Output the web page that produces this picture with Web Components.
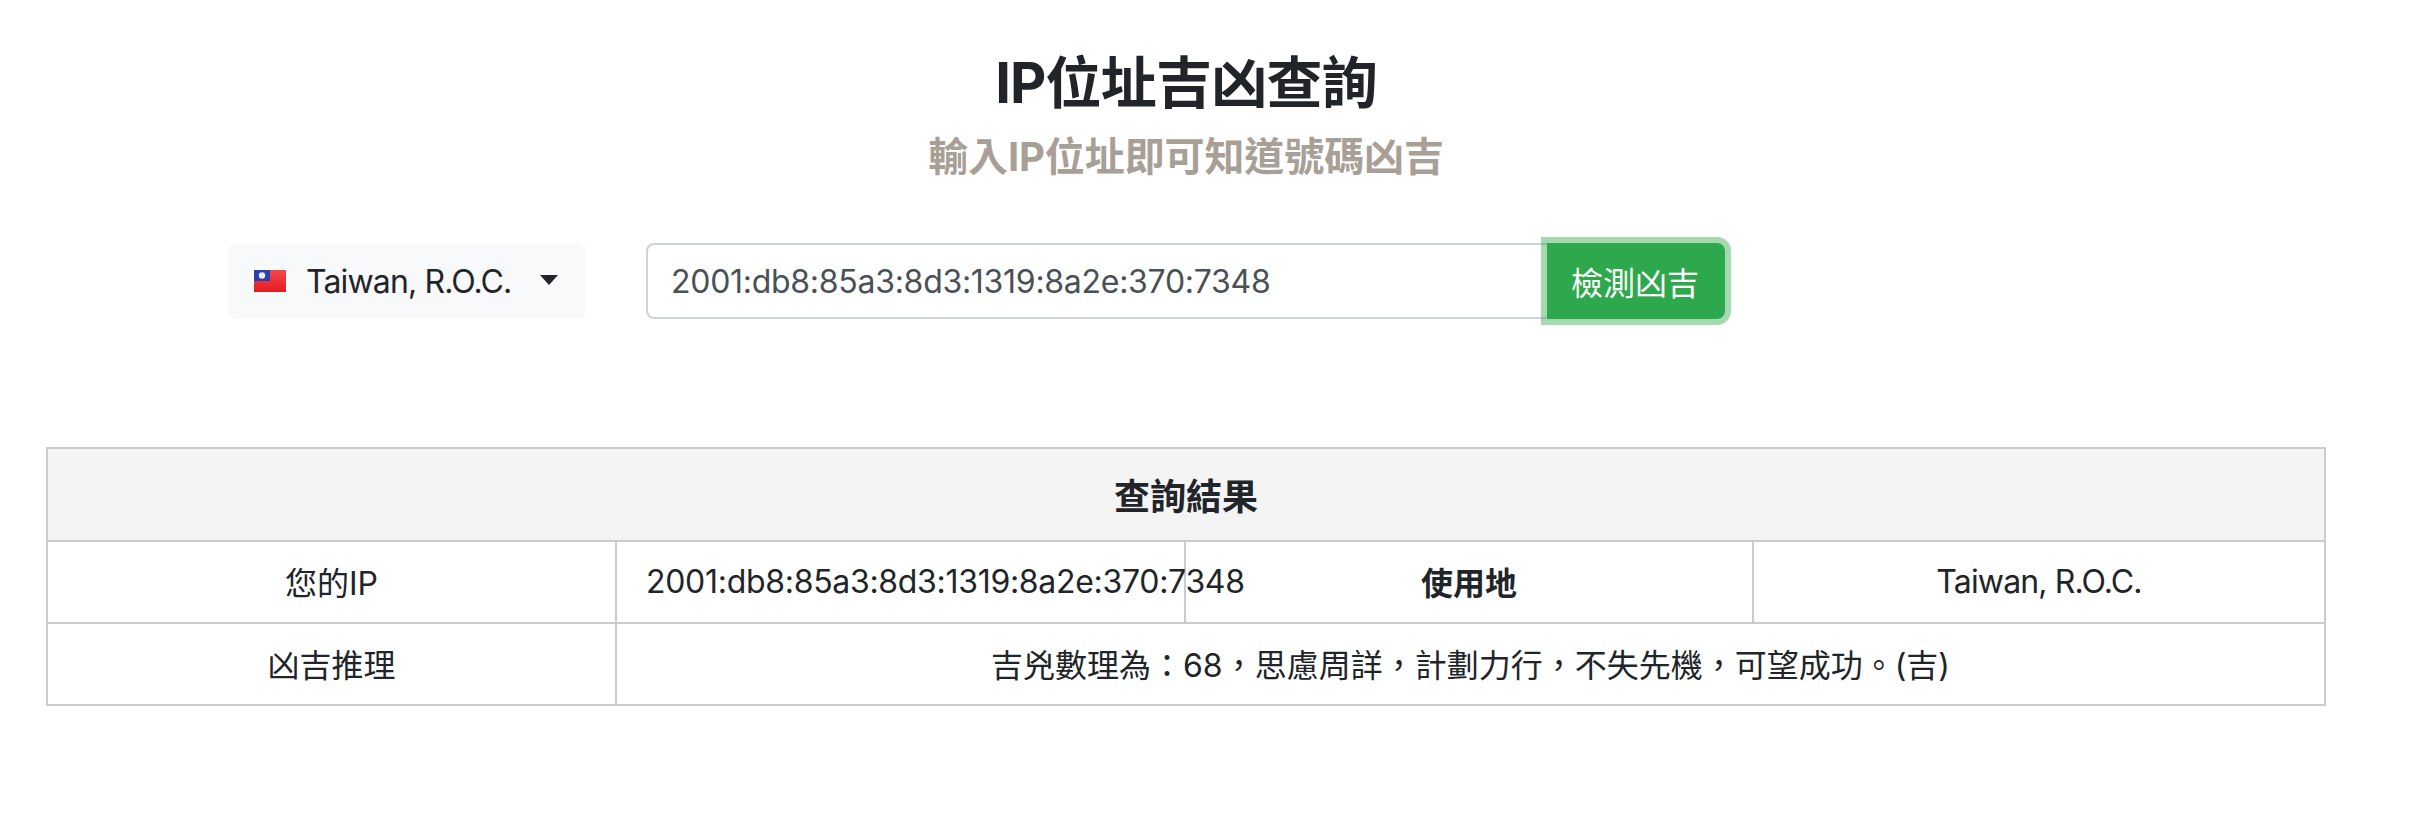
<!DOCTYPE html>
<html lang="zh-Hant">
<head>
<meta charset="utf-8">
<title>IP位址吉凶查詢</title>
<style>
  html, body { margin: 0; background: #fff; }
  body {
    font-family: Inter, "Noto Sans CJK TC", sans-serif;
    color: #212529;
  }
</style>
</head>
<body>
<ip-page>
  <page-heading>
    <span slot="title">IP位址吉凶查詢</span>
    <span slot="sub">輸入IP位址即可知道號碼凶吉</span>
  </page-heading>
  <ip-search value="2001:db8:85a3:8d3:1319:8a2e:370:7348" label="檢測凶吉">
    <country-select>Taiwan, R.O.C.</country-select>
  </ip-search>
  <result-table></result-table>
</ip-page>

<script>
class IpPage extends HTMLElement {
  constructor() {
    super();
    this.attachShadow({ mode: 'open' });
    this.shadowRoot.innerHTML = `
      <style>
        :host {
          display: block;
          padding: 0 100px 0 46px;
          font-family: Inter, "Noto Sans CJK TC", sans-serif;
        }
      </style>
      <slot></slot>
    `;
  }
}
customElements.define('ip-page', IpPage);

class PageHeading extends HTMLElement {
  constructor() {
    super();
    this.attachShadow({ mode: 'open' });
    this.shadowRoot.innerHTML = `
      <style>
        :host {
          display: block;
          text-align: center;
          padding-top: 47px;
        }
        h1 {
          margin: 0;
          font-size: 56px;
          line-height: 72px;
          font-weight: 700;
          letter-spacing: -0.8px;
          color: #212529;
        }
        h2 {
          margin: 6px 0 0;
          font-size: 40px;
          line-height: 64px;
          font-weight: 700;
          letter-spacing: -0.1px;
          color: #a89f97;
        }
      </style>
      <h1><slot name="title"></slot></h1>
      <h2><slot name="sub"></slot></h2>
    `;
  }
}
customElements.define('page-heading', PageHeading);

class CountrySelect extends HTMLElement {
  constructor() {
    super();
    this.attachShadow({ mode: 'open' });
    this.shadowRoot.innerHTML = `
      <style>
        :host {
          display: flex;
          align-items: center;
          box-sizing: border-box;
          width: 358px;
          height: 76px;
          padding: 0 28px 0 26px;
          background: #f8f9fa;
          border-radius: 8px;
          font-size: 32px;
          color: #212529;
        }
        svg { width: 32px; height: 22px; flex: none; margin-right: 20px; }
        .name { flex: 1; white-space: nowrap; letter-spacing: -0.85px; }
        .caret {
          width: 0;
          height: 0;
          border-top: 10px solid #212529;
          border-left: 9px solid transparent;
          border-right: 9px solid transparent;
          margin-top: -3px;
        }
      </style>
      <svg viewBox="0 0 32 22">
        <defs>
          <linearGradient id="red" x1="0" y1="0" x2="0" y2="1">
            <stop offset="0" stop-color="#f4484c"/>
            <stop offset="1" stop-color="#e31b23"/>
          </linearGradient>
        </defs>
        <rect width="32" height="22" fill="url(#red)"/>
        <rect width="16" height="11" fill="#2f3fa8"/>
        <circle cx="8" cy="5.5" r="3.2" fill="#e8ecff"/>
      </svg>
      <span class="name"><slot></slot></span>
      <span class="caret"></span>
    `;
  }
}
customElements.define('country-select', CountrySelect);

class IpSearch extends HTMLElement {
  constructor() {
    super();
    this.attachShadow({ mode: 'open' });
    this.shadowRoot.innerHTML = `
      <style>
        :host {
          display: flex;
          align-items: center;
          padding: 0 0 0 182px;
          margin-top: 54px;
          font-size: 32px;
        }
        .group {
          display: flex;
          margin-left: 60px;
          height: 76px;
        }
        input {
          box-sizing: border-box;
          width: 901px;
          height: 76px;
          padding: 0 23px;
          border: 2px solid #ced4da;
          border-right: 0;
          border-radius: 8px 0 0 8px;
          background: #fff;
          color: #495057;
          font: inherit;
          letter-spacing: -0.28px;
          outline: none;
        }
        button {
          box-sizing: border-box;
          width: 178px;
          height: 76px;
          padding: 0 2px 0 0;
          border: 0;
          border-radius: 0 8px 8px 0;
          background: #2ea84c;
          color: #fff;
          font: inherit;
          box-shadow: 0 0 0 6px rgba(40, 167, 69, .42);
          position: relative;
        }
      </style>
      <slot></slot>
      <div class="group">
        <input type="text">
        <button type="button"></button>
      </div>
    `;
  }
  connectedCallback() {
    this.shadowRoot.querySelector('input').value = this.getAttribute('value');
    this.shadowRoot.querySelector('button').textContent = this.getAttribute('label');
  }
}
customElements.define('ip-search', IpSearch);

class ResultTable extends HTMLElement {
  constructor() {
    super();
    this.attachShadow({ mode: 'open' });
    this.shadowRoot.innerHTML = `
      <style>
        :host {
          display: block;
          margin-top: 128px;
          font-size: 32px;
          color: #212529;
        }
        table {
          width: 100%;
          table-layout: fixed;
          border-collapse: collapse;
        }
        th, td {
          box-sizing: border-box;
          border: 2px solid #ccc;
          padding: 0 30px 2px;
          text-align: center;
          height: 82px;
          white-space: nowrap;
        }
        thead th {
          height: 93px;
          background: #f4f4f4;
          font-size: 36px;
          font-weight: 700;
        }
        tbody th { font-weight: 700; }
        .ip { text-align: left; letter-spacing: -0.3px; padding-left: 29px; }
        .place { letter-spacing: -0.85px; }
      </style>
      <table>
        <colgroup>
          <col style="width:569px"><col style="width:569px"><col style="width:568px"><col>
        </colgroup>
        <thead>
          <tr><th colspan="4">查詢結果</th></tr>
        </thead>
        <tbody>
          <tr>
            <td>您的IP</td>
            <td class="ip">2001:db8:85a3:8d3:1319:8a2e:370:7348</td>
            <th>使用地</th>
            <td class="place">Taiwan, R.O.C.</td>
          </tr>
          <tr>
            <td>凶吉推理</td>
            <td colspan="3">吉兇數理為：68，思慮周詳，計劃力行，不失先機，可望成功。(吉)</td>
          </tr>
        </tbody>
      </table>
    `;
  }
}
customElements.define('result-table', ResultTable);
</script>
</body>
</html>
